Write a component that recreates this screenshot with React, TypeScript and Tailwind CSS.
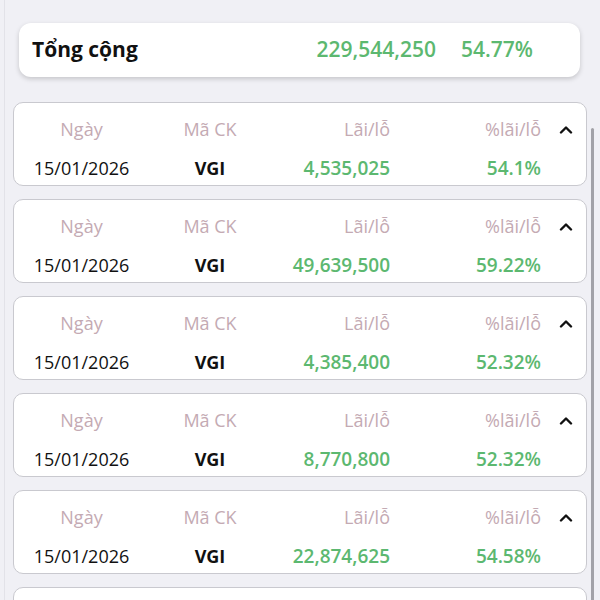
import React from "react";

const rows = [
  { pl: "4,535,025", pct: "54.1%" },
  { pl: "49,639,500", pct: "59.22%" },
  { pl: "4,385,400", pct: "52.32%" },
  { pl: "8,770,800", pct: "52.32%" },
  { pl: "22,874,625", pct: "54.58%" },
  { pl: "4,385,400", pct: "52.32%" },
];

function Chevron() {
  return (
    <svg width="14" height="9" viewBox="0 0 14 9" fill="none">
      <path d="M2 7.5 L7 2.5 L12 7.5" stroke="#111" strokeWidth="2.4" strokeLinecap="round" strokeLinejoin="round" />
    </svg>
  );
}

export default function App() {
  return (
    <div
      className="relative w-[600px] h-[600px] overflow-hidden bg-[#f0f0f5]"
      style={{ fontFamily: '"Open Sans", "Noto Sans", sans-serif' }}
    >
      <div className="absolute left-[4px] top-0 h-full w-px bg-[#e2e2e8]" />
      <div className="pt-[23px] pl-[19px] pr-[20px]">
        <div className="h-[54px] rounded-[12px] bg-white shadow-[0_2px_5px_rgba(0,0,0,0.18)] flex items-center pl-[13px]">
          <span className="text-[21px] font-bold text-[#111]">Tổng cộng</span>
          <span className="ml-auto text-[21px] font-semibold text-[#5cb870]">229,544,250</span>
          <span className="ml-[25px] mr-[47px] text-[21px] font-semibold text-[#5cb870]">54.77%</span>
        </div>
      </div>
      <div className="mt-[25px] px-[13px] flex flex-col gap-[13px]">
        {rows.map((r, i) => (
          <div key={i} className="h-[84px] shrink-0 rounded-[10px] border border-[#c9c9cf] bg-white pt-[13px]">
            <div className="flex items-center h-[26px] pl-[19px] text-[18px] text-[#c4aab3]">
              <div className="w-[97px] shrink-0 text-center">Ngày</div>
              <div className="w-[160px] shrink-0 text-center">Mã CK</div>
              <div className="w-[100px] shrink-0 text-right">Lãi/lỗ</div>
              <div className="w-[151px] shrink-0 text-right">%lãi/lỗ</div>
              <div className="w-[45px] shrink-0 flex justify-center pl-[5px] pt-[1px]">
                <Chevron />
              </div>
            </div>
            <div className="flex items-center h-[26px] mt-[13px] pl-[19px] text-[18px]">
              <div className="w-[97px] shrink-0 text-center text-[#111]">15/01/2026</div>
              <div className="w-[160px] shrink-0 text-center font-bold text-[#111]">VGI</div>
              <div className="w-[100px] shrink-0 text-right font-semibold text-[19px] text-[#5cb870] whitespace-nowrap">{r.pl}</div>
              <div className="w-[151px] shrink-0 text-right font-semibold text-[19px] text-[#5cb870]">{r.pct}</div>
            </div>
          </div>
        ))}
      </div>
      <div className="absolute left-[591px] top-[128px] h-[480px] w-[3px] rounded-full bg-[#a2a2a8]" />
    </div>
  );
}
